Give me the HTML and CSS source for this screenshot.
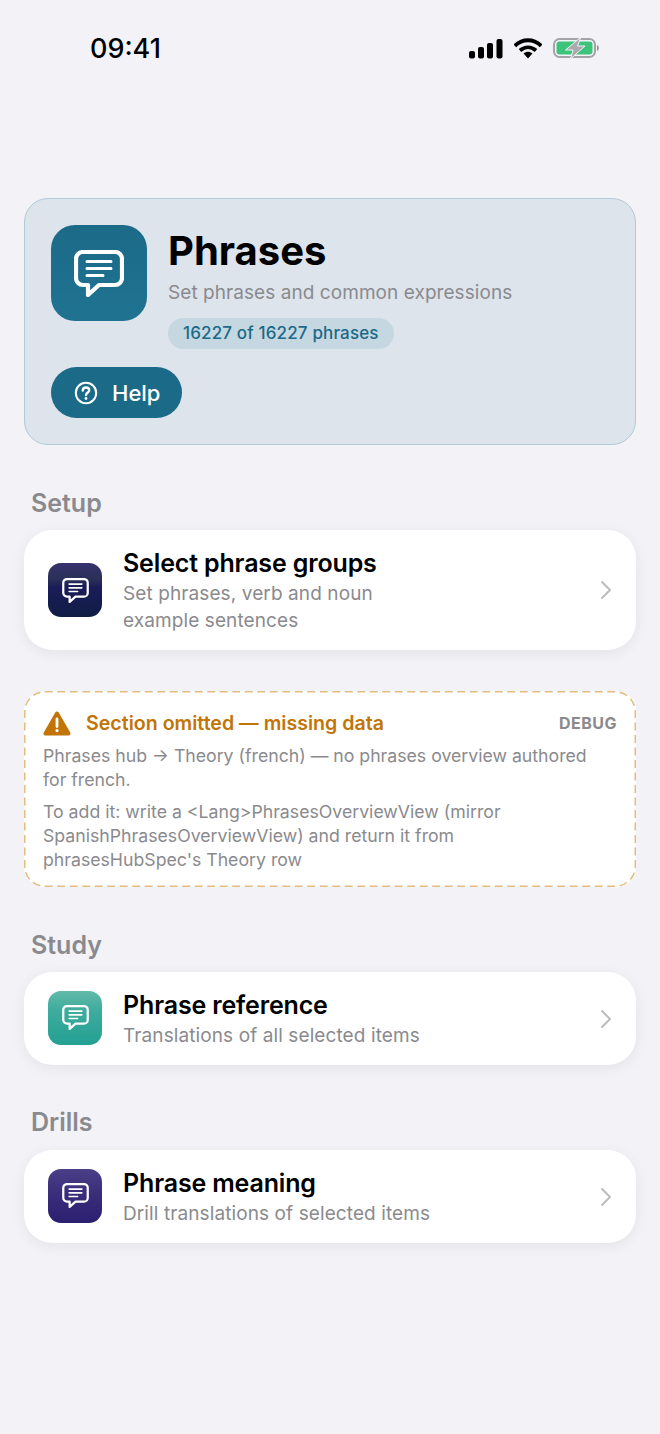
FILE: index.html
```html
<!DOCTYPE html>
<html lang="en">
<head>
  <meta charset="UTF-8">
  <meta name="viewport" content="width=device-width, initial-scale=1.0">
  <title>Phrases</title>
  <link rel="stylesheet" href="styles.css">
</head>
<body>
  <svg class="defs" width="0" height="0">
    <symbol id="bubble" viewBox="0 0 50 47">
      <path d="M9 2H41a7 7 0 0 1 7 7V28a7 7 0 0 1-7 7H25L14 45V35H9a7 7 0 0 1-7-7V9a7 7 0 0 1 7-7Z" fill="none" stroke="currentColor" stroke-width="4.200" stroke-linejoin="round"/>
      <path d="M13 11.500H37M13 18.500H37M13 25.500H29" fill="none" stroke="currentColor" stroke-width="3" stroke-linecap="round"/>
    </symbol>
  </svg>

  <div class="status-bar">
    <span class="time">09:41</span>
    <div class="status-icons">
      <svg width="35" height="21" viewBox="0 0 35 21">
        <rect x="1" y="13" width="6" height="7.500" rx="2" fill="#000"/>
        <rect x="10" y="9" width="6" height="11.500" rx="2" fill="#000"/>
        <rect x="19" y="5" width="6" height="15.500" rx="2" fill="#000"/>
        <rect x="28.500" y="1" width="6" height="19.500" rx="2" fill="#000"/>
      </svg>
      <svg width="28" height="21" viewBox="0 0 28 21">
        <path d="M.8 7.800C8.500 .4 19.500 .4 27.200 7.800" fill="none" stroke="#000" stroke-width="3.800"/>
        <path d="M6 12.500C11 8.200 17 8.200 22 12.500" fill="none" stroke="#000" stroke-width="3.800"/>
        <path d="M9.500 15.500C12.500 13.200 15.500 13.200 18.500 15.500L14 20.500Z" fill="#000"/>
      </svg>
      <svg width="46" height="24" viewBox="0 0 46 24">
        <rect x="1" y="3" width="41" height="18" rx="5.500" fill="none" stroke="#a3a3a8" stroke-width="2"/>
        <rect x="3.500" y="5.500" width="36" height="13" rx="3" fill="#3cc47a"/>
        <path d="M44 9v6c1.200-.5 1.800-1.700 1.800-3s-.6-2.500-1.800-3Z" fill="#8f8f94"/>
        <path d="M28 1 12.500 14H20L17.500 23 32 10H24.500Z" fill="#ababaf" stroke="#f2f2f7" stroke-width="1" stroke-linejoin="round"/>
      </svg>
    </div>
  </div>

  <main class="content">
    <section class="hero">
      <div class="hero-top">
        <div class="hero-icon">
          <svg class="bubble-lg"><use href="#bubble"/></svg>
        </div>
        <div class="hero-text">
          <h1>Phrases</h1>
          <p class="hero-sub">Set phrases and common expressions</p>
          <span class="count-pill">16227 of 16227 phrases</span>
        </div>
      </div>
      <button class="help-btn">
        <svg width="24" height="24" viewBox="0 0 24 24">
          <circle cx="12" cy="12" r="10.200" fill="none" stroke="#fff" stroke-width="2"/>
          <path d="M8.800 9.500c0-1.900 1.400-3 3.200-3s3.200 1.100 3.200 2.800c0 2.500-3.200 2.400-3.200 4.700" fill="none" stroke="#fff" stroke-width="2.400" stroke-linecap="round"/>
          <circle cx="12" cy="17.500" r="1.400" fill="#fff"/>
        </svg>
        Help
      </button>
    </section>

    <h2 class="section-label label-setup">Setup</h2>
    <a class="row-card row-tall">
      <div class="row-icon icon-navy"><svg class="bubble-sm"><use href="#bubble"/></svg></div>
      <div class="row-text">
        <div class="row-title">Select phrase groups</div>
        <div class="row-sub">Set phrases, verb and noun<br>example sentences</div>
      </div>
      <svg class="chevron" width="12" height="20" viewBox="0 0 12 20"><path d="M2 2l8 8-8 8" fill="none" stroke="#bcbcc0" stroke-width="2" stroke-linecap="round" stroke-linejoin="round"/></svg>
    </a>

    <section class="debug-box">
      <svg class="debug-border" width="612" height="196"><rect x="0.750" y="0.750" width="610.500" height="194.500" rx="20" fill="none" stroke="#e3bc80" stroke-width="1.500" stroke-dasharray="8 4.500"/></svg>
      <div class="debug-head">
        <svg width="28" height="25" viewBox="0 0 28 25">
          <path d="M14 2.500 2.500 22.500H25.500Z" fill="#c27406" stroke="#c27406" stroke-width="4" stroke-linejoin="round"/>
          <path d="M14 8v7.500" stroke="#fff" stroke-width="2.800" stroke-linecap="round"/>
          <circle cx="14" cy="19.600" r="1.600" fill="#fff"/>
        </svg>
        <span class="debug-title">Section omitted — missing data</span>
        <span class="debug-tag">DEBUG</span>
      </div>
      <p class="debug-text">Phrases hub → Theory (french) — no phrases overview authored for french.</p>
      <p class="debug-text">To add it: write a &lt;Lang&gt;PhrasesOverviewView (mirror SpanishPhrasesOverviewView) and return it from phrasesHubSpec's Theory row</p>
    </section>

    <h2 class="section-label label-study">Study</h2>
    <a class="row-card">
      <div class="row-icon icon-teal"><svg class="bubble-sm"><use href="#bubble"/></svg></div>
      <div class="row-text">
        <div class="row-title">Phrase reference</div>
        <div class="row-sub">Translations of all selected items</div>
      </div>
      <svg class="chevron" width="12" height="20" viewBox="0 0 12 20"><path d="M2 2l8 8-8 8" fill="none" stroke="#bcbcc0" stroke-width="2" stroke-linecap="round" stroke-linejoin="round"/></svg>
    </a>

    <h2 class="section-label label-drills">Drills</h2>
    <a class="row-card">
      <div class="row-icon icon-purple"><svg class="bubble-sm"><use href="#bubble"/></svg></div>
      <div class="row-text">
        <div class="row-title">Phrase meaning</div>
        <div class="row-sub">Drill translations of selected items</div>
      </div>
      <svg class="chevron" width="12" height="20" viewBox="0 0 12 20"><path d="M2 2l8 8-8 8" fill="none" stroke="#bcbcc0" stroke-width="2" stroke-linecap="round" stroke-linejoin="round"/></svg>
    </a>
  </main>
</body>
</html>
```

FILE: styles.css
```css
* {
  box-sizing: border-box;
}

body {
  margin: 0;
  min-height: 1434px;
  background-color: #f2f2f7;
  font-family: Inter, "Liberation Sans", sans-serif;
  color: #000;
}

.defs {
  display: block;
  height: 0;
}

.status-bar {
  display: flex;
  align-items: center;
  justify-content: space-between;
  height: 34px;
  margin-top: 31px;
  padding: 0 61px 0 90px;
}

.time {
  font-size: 27px;
  font-weight: 500;
}

.status-icons {
  display: flex;
  align-items: center;
  gap: 11px;
}

.content {
  display: flex;
  flex-direction: column;
  padding: 133px 24px 0;
}

.hero {
  height: 247px;
  padding: 26px 26px 0;
  background-color: #dde4ec;
  border: 1.500px solid #afcbd9;
  border-radius: 24px;
}

.hero-top {
  display: flex;
  gap: 21px;
}

.hero-icon {
  display: flex;
  align-items: center;
  justify-content: center;
  flex-shrink: 0;
  width: 96px;
  height: 96px;
  background: linear-gradient(#1b6a88, #1f7391);
  border-radius: 24px;
  color: #fff;
}

.bubble-lg {
  width: 50px;
  height: 47px;
}

.hero-text {
  padding-top: 1px;
}

h1 {
  margin: 0;
  font-size: 40px;
  line-height: 50px;
  font-weight: 700;
}

.hero-sub {
  margin: 5px 0 0;
  font-size: 19px;
  line-height: 24px;
  letter-spacing: 0.06px;
  color: #8a8a8e;
}

.count-pill {
  display: inline-block;
  margin-top: 13px;
  padding: 0 15px;
  height: 31px;
  line-height: 31px;
  font-size: 17px;
  font-weight: 500;
  letter-spacing: 0.15px;
  color: #1b6a88;
  background-color: #c5d7e0;
  border-radius: 16px;
}

.help-btn {
  display: flex;
  align-items: center;
  gap: 14px;
  width: 131px;
  height: 51px;
  margin-top: 18px;
  padding: 0 0 0 23px;
  border: none;
  border-radius: 26px;
  background-color: #1b6a88;
  color: #fff;
  font-family: inherit;
  font-size: 22px;
  font-weight: 500;
}

.section-label {
  margin: 0 0 11px 7px;
  font-size: 25px;
  line-height: 32px;
  font-weight: 600;
  color: #8a8a8e;
}

.label-setup {
  margin-top: 42px;
}

.label-study {
  margin-top: 42px;
}

.label-drills {
  margin-top: 41px;
  margin-bottom: 12px;
}

.row-card {
  display: flex;
  align-items: center;
  height: 93px;
  padding: 0 24px;
  background-color: #fff;
  border-radius: 28px;
  box-shadow: 0 3px 14px rgba(0, 0, 0, 0.065);
}

.row-tall {
  height: 120px;
}

.row-tall .row-text {
  padding-top: 1px;
}

.row-icon {
  display: flex;
  align-items: center;
  justify-content: center;
  flex-shrink: 0;
  width: 54px;
  height: 54px;
  margin-bottom: 2px;
  border-radius: 13px;
  color: #fff;
}

.row-tall .row-icon {
  margin-bottom: 0;
}

.icon-navy {
  background: linear-gradient(#37306e, #2a3158 30%, #1a1c58 45%, #101d45);
}

.icon-teal {
  background: linear-gradient(#63baaa, #3eac9e 35%, #23a092);
}

.icon-purple {
  background: linear-gradient(#4a3f88, #3a2d7a 45%, #2b1f70);
}

.bubble-sm {
  width: 27px;
  height: 25px;
}

.row-text {
  flex: 1;
  margin-left: 21px;
  padding-top: 1px;
}

.row-title {
  margin-bottom: 2px;
  font-size: 25px;
  line-height: 30px;
  font-weight: 600;
  letter-spacing: -0.15px;
}

.row-sub {
  font-size: 19px;
  line-height: 27px;
  letter-spacing: 0.1px;
  color: #8a8a8e;
}

.chevron {
  flex-shrink: 0;
}

.debug-box {
  position: relative;
  height: 196px;
  margin-top: 41px;
  padding: 19px 19px 0;
  background-color: #fff;
  border-radius: 20px;
}

.debug-border {
  position: absolute;
  top: 0;
  left: 0;
}

.debug-head {
  display: flex;
  align-items: center;
  height: 26px;
  margin-bottom: 8px;
}

.debug-title {
  flex: 1;
  margin-left: 15px;
  font-size: 19.600px;
  font-weight: 600;
  color: #c27406;
}

.debug-tag {
  font-size: 16px;
  font-weight: 700;
  letter-spacing: 0.5px;
  color: #8a8a8e;
}

.debug-text {
  margin: 0 0 8px;
  padding-right: 18px;
  font-size: 17.700px;
  line-height: 24px;
  color: #8a8a8e;
}
```
